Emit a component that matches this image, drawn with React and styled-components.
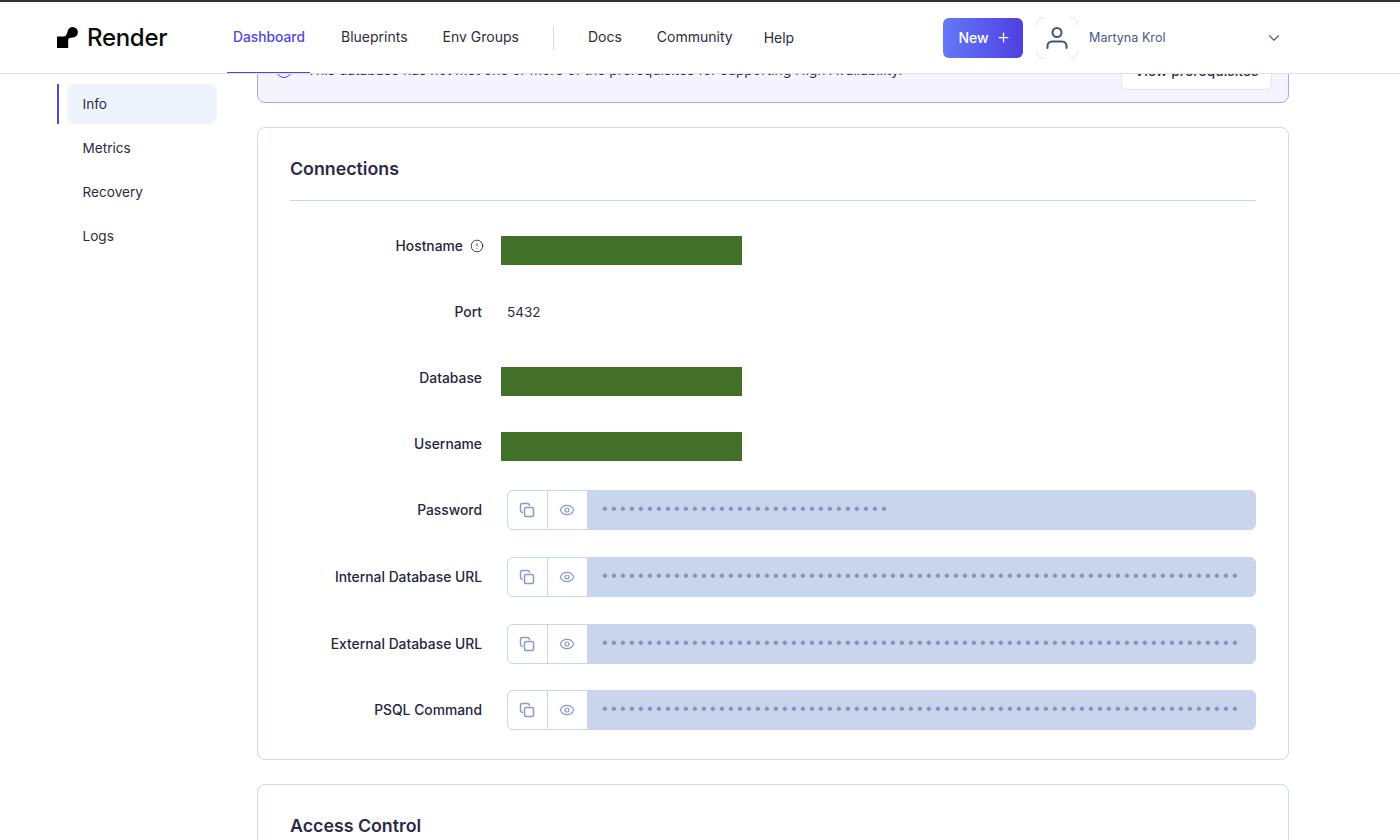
import React from "react"
import styled, { createGlobalStyle } from "styled-components"
import { Eye, ChevronDown, Plus, CircleAlert } from "lucide-react"

const GlobalStyle = createGlobalStyle`
  html, body {
    margin: 0;
    height: 100%;
    background: #fff;
    overflow: hidden;
  }
  body {
    font-family: Inter, "Liberation Sans", sans-serif;
    font-size: 14px;
    color: #24243a;
  }
`

const navLinks = [
  { label: "Dashboard", active: true, gap: 25 },
  { label: "Blueprints", gap: 23 },
  { label: "Env Groups", gap: 28 },
]

const navLinksRight = [
  { label: "Docs", gap: 23 },
  { label: "Community", gap: 19 },
  { label: "Help", gap: 0, low: true },
]

const sideLinks = ["Info", "Metrics", "Recovery", "Logs"]

const fields = [
  { label: "Hostname", hint: true, redacted: 10, gap: 26 },
  { label: "Port", value: "5432", gap: 26 },
  { label: "Database", redacted: 9, gap: 26 },
  { label: "Username", redacted: 8, gap: 26 },
  { label: "Password", dots: 32, gap: 27 },
  { label: "Internal Database URL", dots: 71, gap: 27 },
  { label: "External Database URL", dots: 71, gap: 26 },
  { label: "PSQL Command", dots: 71, gap: 0 },
]

const Logo = () => (
  <LogoWrap>
    <svg width="21" height="21" viewBox="0 0 21 21" fill="#000">
      <path d="M0 9.5h6.5c2 0 3-1.5 4-4.5A5.2 5.2 0 1 1 16 10.4c-3 0-4.8.6-4.8 2.6V21H0z" />
    </svg>
    <LogoText>Render</LogoText>
  </LogoWrap>
)

const Avatar = () => (
  <AvatarBox>
    <svg width="42" height="42" viewBox="0 0 42 42" fill="none">
      <g stroke="#dcdff8" strokeWidth="1">
        <path d="M.5 8C.5 3.5 3.5.5 8 .5" />
        <path d="M34 .5c4.5 0 7.5 3 7.5 7.5" />
        <path d="M41.5 34c0 4.5-3 7.5-7.5 7.5" />
        <path d="M8 41.5C3.5 41.5.5 38.5.5 34" />
      </g>
      <g stroke="#3d5478" strokeWidth="2" strokeLinecap="round">
        <circle cx="21" cy="15.5" r="4.5" />
        <path d="M11.5 31v-2c0-2.5 2-4.5 4.5-4.5h10c2.5 0 4.5 2 4.5 4.5v2" />
      </g>
    </svg>
  </AvatarBox>
)

const CopyIcon = () => (
  <svg width="16" height="16" viewBox="0 0 16 16" fill="none" stroke="currentColor" strokeWidth="1.5">
    <rect x="5.5" y="5.5" width="9" height="9" rx="1.8" />
    <path d="M3.2 10.5C2.2 10.2 1.5 9.3 1.5 8.3V3.5c0-1.1.9-2 2-2h4.8c1 0 1.9.7 2.2 1.7" strokeLinecap="round" />
  </svg>
)

const SecretField = ({ dots }) => (
  <Secret>
    <SecretButton aria-label="Copy"><CopyIcon /></SecretButton>
    <SecretButton aria-label="Show"><Eye size={16} strokeWidth={1.75} /></SecretButton>
    <SecretValue>{"•".repeat(dots)}</SecretValue>
  </Secret>
)

const App = () => (
  <>
    <GlobalStyle />
    <Page>
      <Header>
        <Logo />
        <Nav>
          {navLinks.map(l => (
            <NavLink key={l.label} $active={l.active} $gap={l.gap}>{l.label}</NavLink>
          ))}
          <NavDivider />
          {navLinksRight.map(l => (
            <NavLink key={l.label} $gap={l.gap} $low={l.low}>{l.label}</NavLink>
          ))}
        </Nav>
        <NewButton>New <Plus size={15} strokeWidth={2} /></NewButton>
        <User>
          <Avatar />
          <UserName>Martyna Krol</UserName>
          <ChevronDown size={18} strokeWidth={1.5} color="#4b5a88" />
        </User>
      </Header>
      <Main>
        <Sidebar>
          {sideLinks.map((s, i) => (
            <SideLink key={s} $active={i === 0}>{s}</SideLink>
          ))}
        </Sidebar>
        <Content>
          <Banner>
            <BannerIcon />
            <BannerText>This database has not met one or more of the prerequisites for supporting High Availability.</BannerText>
            <BannerButton>View prerequisites</BannerButton>
          </Banner>
          <Card>
            <CardTitle>Connections</CardTitle>
            <Fields>
              {fields.map(f => (
                <Field key={f.label} $gap={f.gap}>
                  <FieldLabel>
                    {f.label}
                    {f.hint && <CircleAlert size={14} strokeWidth={1.6} />}
                  </FieldLabel>
                  {f.value && <FieldValue>{f.value}</FieldValue>}
                  {f.redacted && <Redacted $top={f.redacted} />}
                  {f.dots && <SecretField dots={f.dots} />}
                </Field>
              ))}
            </Fields>
          </Card>
          <Card>
            <CardTitle>Access Control</CardTitle>
          </Card>
        </Content>
      </Main>
    </Page>
  </>
)

const Page = styled.div`
  height: 840px;
  overflow: hidden;
  display: flex;
  flex-direction: column;
`

const Header = styled.header`
  position: relative;
  z-index: 2;
  flex: none;
  box-sizing: border-box;
  height: 74px;
  display: flex;
  align-items: center;
  padding: 0 119px 0 57px;
  background: #fff;
  border-top: 2px solid #333;
  border-bottom: 1px solid #d9e0ee;
`

const LogoWrap = styled.div`
  display: flex;
  align-items: center;
  gap: 9px;
  width: 170px;
  flex: none;
`

const LogoText = styled.span`
  font-size: 24px;
  font-weight: 500;
  letter-spacing: -0.3px;
  color: #0b0b0b;
`

const Nav = styled.nav`
  display: flex;
  align-items: center;
  height: 100%;
  flex: 1;
`

const NavLink = styled.a`
  display: flex;
  align-items: center;
  height: 100%;
  box-sizing: border-box;
  padding: ${props => (props.$low ? "0 6px" : props.$active ? "0 5px 2px 6px" : "0 6px 2px")};
  margin-right: ${props => props.$gap}px;
  font-size: ${props => (props.$active ? "13.8px" : "14px")};
  font-weight: ${props => (props.$active ? 500 : 400)};
  color: ${props => (props.$active ? "#5046e4" : "#2c2c3e")};
  box-shadow: ${props => (props.$active ? "inset 0 -1px 0 #5046e4" : "none")};
`

const NavDivider = styled.span`
  width: 1px;
  height: 24px;
  background: #d5dcec;
  margin-right: 28px;
`

const NewButton = styled.button`
  flex: none;
  width: 80px;
  height: 40px;
  margin-right: 13px;
  padding: 0 0 0 3px;
  border: 0;
  border-radius: 6px;
  display: flex;
  align-items: center;
  justify-content: center;
  gap: 7px;
  font-family: inherit;
  font-size: 14px;
  font-weight: 500;
  color: #fff;
  background: linear-gradient(90deg, #6478f6, #4f3fe2);
`

const User = styled.div`
  display: flex;
  align-items: center;
  flex: none;
  width: 245px;

  > svg { margin-right: -2px; }
`

const AvatarBox = styled.div`
  width: 42px;
  height: 42px;
  flex: none;
  margin-right: 11px;
  svg { display: block; }
`

const UserName = styled.span`
  flex: 1;
  font-size: 12.6px;
  color: #4b5a88;
`

const Main = styled.main`
  flex: 1;
  display: flex;
  gap: 40px;
  padding-left: 57px;
`

const Sidebar = styled.aside`
  width: 160px;
  flex: none;
  display: flex;
  flex-direction: column;
  gap: 4px;
  padding-top: 10px;
`

const SideLink = styled.a`
  position: relative;
  box-sizing: border-box;
  height: 40px;
  margin-left: 10px;
  padding-left: 15.5px;
  display: flex;
  align-items: center;
  border-radius: 8px;
  font-size: 13.6px;
  color: #2c2c3e;
  background: ${props => (props.$active ? "#eff3fe" : "transparent")};

  &::before {
    content: "";
    display: ${props => (props.$active ? "block" : "none")};
    position: absolute;
    left: -10px;
    top: 0;
    bottom: 0;
    width: 2px;
    background: #5046e4;
  }
`

const Content = styled.div`
  width: 1032px;
  flex: none;
  margin-top: -37px;
  display: flex;
  flex-direction: column;
  gap: 24px;
`

const Banner = styled.div`
  flex: none;
  box-sizing: border-box;
  height: 66px;
  display: flex;
  align-items: center;
  padding: 0 16px 0 18px;
  background: #f4f3fe;
  border: 1px solid #aaa6f5;
  border-radius: 8px;
`

const BannerIcon = styled.span`
  width: 14px;
  height: 14px;
  flex: none;
  border: 1.5px solid #5046e4;
  border-radius: 50%;
  margin-right: 15px;
`

const BannerText = styled.span`
  flex: 1;
  font-size: 13.86px;
  color: #2c2c3e;
`

const BannerButton = styled.button`
  width: 151px;
  height: 40px;
  padding: 0;
  background: #fff;
  border: 1px solid #e0e4f2;
  border-radius: 6px;
  font-family: inherit;
  font-size: 14px;
  font-weight: 500;
  color: #2c2c3e;
`

const Card = styled.section`
  flex: none;
  box-sizing: border-box;
  padding: 0 32px 29px;
  background: #fff;
  border: 1px solid #d0daee;
  border-radius: 8px;
`

const CardTitle = styled.h2`
  margin: 0;
  height: 73px;
  padding-top: 8px;
  box-sizing: border-box;
  display: flex;
  align-items: center;
  font-size: 17.8px;
  font-weight: 600;
  color: #2b2b45;
  border-bottom: 1px solid #c9d5ec;
`

const Fields = styled.div`
  padding-top: 25px;
`

const Field = styled.div`
  display: flex;
  height: 40px;
  margin-bottom: ${props => props.$gap}px;
`

const FieldLabel = styled.div`
  width: 192px;
  flex: none;
  height: 40px;
  display: flex;
  align-items: center;
  justify-content: flex-end;
  gap: 7px;
  font-size: 13.85px;
  font-weight: 500;
  color: #26263c;
  svg {
    color: #3a3a50;
    margin-right: -2px;
  }
`

const FieldValue = styled.div`
  margin-left: 25px;
  line-height: 40px;
  font-size: 13.5px;
  color: #2c2c3e;
`

const Redacted = styled.div`
  width: 241px;
  height: 29px;
  margin-left: 19px;
  margin-top: ${props => props.$top}px;
  background: #437029;
`

const Secret = styled.div`
  flex: 1;
  height: 40px;
  margin-left: 25px;
  display: flex;
  overflow: hidden;
  box-sizing: border-box;
  border-radius: 6px;
  border: 1px solid #c9d5ec;
  background: #c9d5ec;
`

const SecretButton = styled.button`
  width: 40px;
  flex: none;
  padding: 0 2px 0 0;
  border: 0;
  border-right: 1px solid #c9d5ec;
  background: #fff;
  display: flex;
  align-items: center;
  justify-content: center;
  color: #8a9ac6;
`

const SecretValue = styled.div`
  flex: 1;
  padding-left: 12px;
  white-space: nowrap;
  overflow: hidden;
  font-family: "Liberation Mono", monospace;
  font-size: 16px;
  line-height: 38px;
  letter-spacing: -0.6px;
  color: #8796b8;
`

export default App
